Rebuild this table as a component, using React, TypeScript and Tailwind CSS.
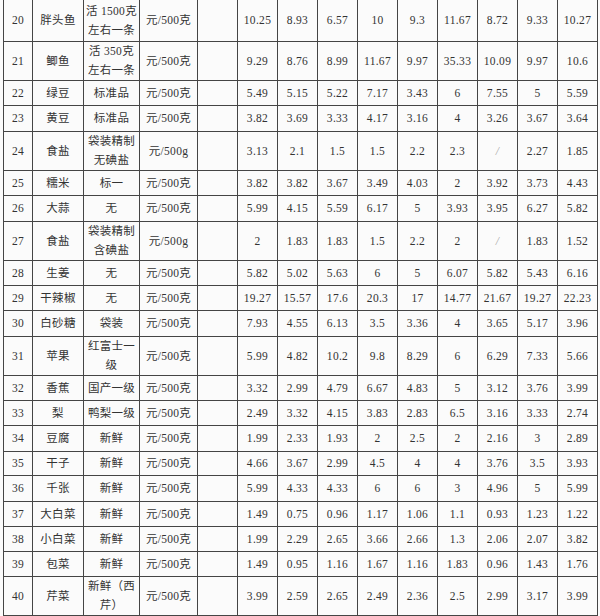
const rows: { no: number; name: string; spec: string[]; unit: string; h: string; vals: string[] }[] = [
  { no: 20, name: "胖头鱼", spec: ["活 1500克", "左右一条"], unit: "元/500克", h: "h-[42px]", vals: ["10.25", "8.93", "6.57", "10", "9.3", "11.67", "8.72", "9.33", "10.27"] },
  { no: 21, name: "鲫鱼", spec: ["活 350克", "左右一条"], unit: "元/500克", h: "h-[38px]", vals: ["9.29", "8.76", "8.99", "11.67", "9.97", "35.33", "10.09", "9.97", "10.6"] },
  { no: 22, name: "绿豆", spec: ["标准品"], unit: "元/500克", h: "h-[25px]", vals: ["5.49", "5.15", "5.22", "7.17", "3.43", "6", "7.55", "5", "5.59"] },
  { no: 23, name: "黄豆", spec: ["标准品"], unit: "元/500克", h: "h-[26px]", vals: ["3.82", "3.69", "3.33", "4.17", "3.16", "4", "3.26", "3.67", "3.64"] },
  { no: 24, name: "食盐", spec: ["袋装精制", "无碘盐"], unit: "元/500g", h: "h-[38px]", vals: ["3.13", "2.1", "1.5", "1.5", "2.2", "2.3", "/", "2.27", "1.85"] },
  { no: 25, name: "糯米", spec: ["标一"], unit: "元/500克", h: "h-[25px]", vals: ["3.82", "3.82", "3.67", "3.49", "4.03", "2", "3.92", "3.73", "4.43"] },
  { no: 26, name: "大蒜", spec: ["无"], unit: "元/500克", h: "h-[26px]", vals: ["5.99", "4.15", "5.59", "6.17", "5", "3.93", "3.95", "6.27", "5.82"] },
  { no: 27, name: "食盐", spec: ["袋装精制", "含碘盐"], unit: "元/500g", h: "h-[39px]", vals: ["2", "1.83", "1.83", "1.5", "2.2", "2", "/", "1.83", "1.52"] },
  { no: 28, name: "生姜", spec: ["无"], unit: "元/500克", h: "h-[25px]", vals: ["5.82", "5.02", "5.63", "6", "5", "6.07", "5.82", "5.43", "6.16"] },
  { no: 29, name: "干辣椒", spec: ["无"], unit: "元/500克", h: "h-[25px]", vals: ["19.27", "15.57", "17.6", "20.3", "17", "14.77", "21.67", "19.27", "22.23"] },
  { no: 30, name: "白砂糖", spec: ["袋装"], unit: "元/500克", h: "h-[26px]", vals: ["7.93", "4.55", "6.13", "3.5", "3.36", "4", "3.65", "5.17", "3.96"] },
  { no: 31, name: "苹果", spec: ["红富士一", "级"], unit: "元/500克", h: "h-[39px]", vals: ["5.99", "4.82", "10.2", "9.8", "8.29", "6", "6.29", "7.33", "5.66"] },
  { no: 32, name: "香蕉", spec: ["国产一级"], unit: "元/500克", h: "h-[25px]", vals: ["3.32", "2.99", "4.79", "6.67", "4.83", "5", "3.12", "3.76", "3.99"] },
  { no: 33, name: "梨", spec: ["鸭梨一级"], unit: "元/500克", h: "h-[25px]", vals: ["2.49", "3.32", "4.15", "3.83", "2.83", "6.5", "3.16", "3.33", "2.74"] },
  { no: 34, name: "豆腐", spec: ["新鲜"], unit: "元/500克", h: "h-[26px]", vals: ["1.99", "2.33", "1.93", "2", "2.5", "2", "2.16", "3", "2.89"] },
  { no: 35, name: "干子", spec: ["新鲜"], unit: "元/500克", h: "h-[24px]", vals: ["4.66", "3.67", "2.99", "4.5", "4", "4", "3.76", "3.5", "3.93"] },
  { no: 36, name: "千张", spec: ["新鲜"], unit: "元/500克", h: "h-[26px]", vals: ["5.99", "4.33", "4.33", "6", "6", "3", "4.96", "5", "5.99"] },
  { no: 37, name: "大白菜", spec: ["新鲜"], unit: "元/500克", h: "h-[25px]", vals: ["1.49", "0.75", "0.96", "1.17", "1.06", "1.1", "0.93", "1.23", "1.22"] },
  { no: 38, name: "小白菜", spec: ["新鲜"], unit: "元/500克", h: "h-[25px]", vals: ["1.99", "2.29", "2.65", "3.66", "2.66", "1.3", "2.06", "2.07", "3.82"] },
  { no: 39, name: "包菜", spec: ["新鲜"], unit: "元/500克", h: "h-[25px]", vals: ["1.49", "0.95", "1.16", "1.67", "1.16", "1.83", "0.96", "1.43", "1.76"] },
  { no: 40, name: "芹菜", spec: ["新鲜（西", "芹）"], unit: "元/500克", h: "h-[39px]", vals: ["3.99", "2.59", "2.65", "2.49", "2.36", "2.5", "2.99", "3.17", "3.99"] },
];

const td = "border border-[#454545] p-0 text-center align-middle whitespace-nowrap";

export default function App() {
  return (
    <div className="w-[600px] h-[616px] overflow-hidden bg-[#fbfbfb] pl-[3px]">
      <table
        className="table-fixed border-collapse w-[595px] -mt-px text-[11.5px] leading-[19px] tracking-[0.3px] text-[#333333]"
        style={{ fontFamily: '"Liberation Serif", "Noto Sans CJK SC", serif' }}
      >
        <colgroup>
          <col className="w-[29px]" />
          <col className="w-[51px]" />
          <col className="w-[56px]" />
          <col className="w-[58px]" />
          <col className="w-[40px]" />
          {Array.from({ length: 9 }).map((_, i) => <col key={i} className="w-[40px]" />)}
        </colgroup>
        <tbody>
          {rows.map((r) => (
            <tr key={r.no} className={r.h}>
              <td className={td}>{r.no}</td>
              <td className={td}>{r.name}</td>
              <td className={td}>{r.spec.map((s, i) => <div key={i}>{s}</div>)}</td>
              <td className={td}>{r.unit}</td>
              <td className={td}></td>
              {r.vals.map((v, i) => (
                <td key={i} className={`${td} ${v === "/" ? "text-[#a8a8a8] italic" : ""}`}>{v}</td>
              ))}
            </tr>
          ))}
          <tr className="h-[25px]">
            {Array.from({ length: 14 }).map((_, i) => <td key={i} className={td}></td>)}
          </tr>
        </tbody>
      </table>
    </div>
  );
}
